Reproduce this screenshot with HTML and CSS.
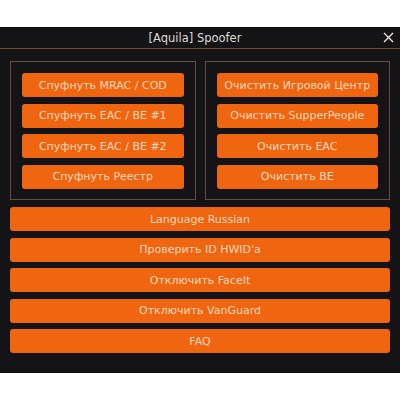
FILE: index.html
```html
<!DOCTYPE html>
<html>
<head>
<meta charset="utf-8">
<link rel="stylesheet" href="styles.css">
</head>
<body>
<div class="window">
  <div class="titlebar">
    <span class="title">[Aquila] Spoofer</span>
    <span class="close">
      <svg width="11" height="11" viewBox="0 0 11 11"><path d="M1 1L10 10M10 1L1 10" stroke="#e8e4e0" stroke-width="1.4" fill="none"/></svg>
    </span>
  </div>
  <div class="content">
    <div class="groups">
      <div class="group">
        <div class="btn">Спуфнуть MRAC / COD</div>
        <div class="btn">Спуфнуть EAC / BE #1</div>
        <div class="btn">Спуфнуть EAC / BE #2</div>
        <div class="btn">Спуфнуть Реестр</div>
      </div>
      <div class="group">
        <div class="btn">Очистить Игровой Центр</div>
        <div class="btn">Очистить SupperPeople</div>
        <div class="btn">Очистить EAC</div>
        <div class="btn">Очистить BE</div>
      </div>
    </div>
    <div class="wide">
      <div class="btn">Language Russian</div>
      <div class="btn">Проверить ID HWID'a</div>
      <div class="btn">Отключить FaceIt</div>
      <div class="btn">Отключить VanGuard</div>
      <div class="btn">FAQ</div>
    </div>
  </div>
</div>
</body>
</html>
```
FILE: styles.css
```css
html, body {
  margin: 0;
  padding: 0;
  background: #ffffff;
}
body {
  padding-top: 27px;
  font-family: "DejaVu Sans", Verdana, sans-serif;
}
.window {
  width: 400px;
  height: 346px;
  background: #141316;
  box-sizing: border-box;
}
.titlebar {
  height: 21px;
  border-bottom: 1px solid #7a4a32;
  display: flex;
  align-items: center;
  justify-content: center;
  position: relative;
}
.title {
  color: #dedad8;
  font-size: 11.5px;
  margin-left: -10px;
}
.close {
  position: absolute;
  right: 6px;
  top: 5px;
  display: flex;
}
.content {
  padding: 12px 10px 0 10px;
}
.groups {
  display: flex;
  gap: 9px;
}
.group {
  flex: 1;
  border: 1px solid #6a4c42;
  height: 139px;
  box-sizing: border-box;
  padding: 11px 11px 0 11px;
  display: flex;
  flex-direction: column;
  gap: 6.5px;
}
.btn {
  background: #f0650f;
  color: #fbd8bf;
  border-radius: 3px;
  height: 24px;
  display: flex;
  align-items: center;
  justify-content: center;
  font-size: 11px;
  white-space: nowrap;
}
.wide {
  margin-top: 7px;
  display: flex;
  flex-direction: column;
  gap: 6.5px;
}
```
